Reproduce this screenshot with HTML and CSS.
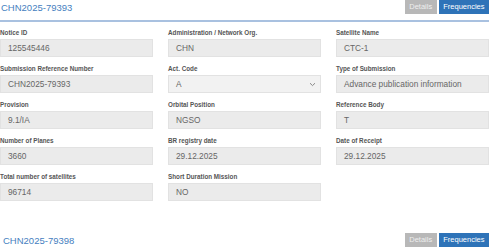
FILE: index.html
```html
<!DOCTYPE html>
<html lang="en">
<head>
    <meta charset="UTF-8">
    <title>Notices</title>
    <link rel="stylesheet" href="styles.css">
</head>
<body>

    <div class="notice">
        <div class="notice-head">
            <h2 class="notice-title">CHN2025-79393</h2>
            <div class="tabs">
                <button class="tab">Details</button>
                <button class="tab tab-active">Frequencies</button>
            </div>
        </div>

        <div class="fields">
            <div class="field">
                <label>Notice ID</label>
                <div class="value">125545446</div>
            </div>
            <div class="field">
                <label>Administration / Network Org.</label>
                <div class="value">CHN</div>
            </div>
            <div class="field">
                <label>Satellite Name</label>
                <div class="value">CTC-1</div>
            </div>

            <div class="field">
                <label>Submission Reference Number</label>
                <div class="value">CHN2025-79393</div>
            </div>
            <div class="field">
                <label>Act. Code</label>
                <div class="value select">
                    A
                    <svg class="chevron" width="7" height="5" viewBox="0 0 7 5"><path d="M1 1.2 L3.5 3.6 L6 1.2" fill="none" stroke="#888" stroke-width="1"/></svg>
                </div>
            </div>
            <div class="field">
                <label>Type of Submission</label>
                <div class="value">Advance publication information</div>
            </div>

            <div class="field">
                <label>Provision</label>
                <div class="value">9.1/IA</div>
            </div>
            <div class="field">
                <label>Orbital Position</label>
                <div class="value">NGSO</div>
            </div>
            <div class="field">
                <label>Reference Body</label>
                <div class="value">T</div>
            </div>

            <div class="field">
                <label>Number of Planes</label>
                <div class="value">3660</div>
            </div>
            <div class="field">
                <label>BR registry date</label>
                <div class="value">29.12.2025</div>
            </div>
            <div class="field">
                <label>Date of Receipt</label>
                <div class="value">29.12.2025</div>
            </div>

            <div class="field">
                <label>Total number of satellites</label>
                <div class="value">96714</div>
            </div>
            <div class="field">
                <label>Short Duration Mission</label>
                <div class="value">NO</div>
            </div>
        </div>
    </div>

    <div class="notice">
        <div class="notice-head">
            <h2 class="notice-title notice-title-indent">CHN2025-79398</h2>
            <div class="tabs">
                <button class="tab">Details</button>
                <button class="tab tab-active">Frequencies</button>
            </div>
        </div>
    </div>

</body>
</html>
```

FILE: styles.css
```css
* {
    box-sizing: border-box;
    margin: 0;
    padding: 0;
}

body {
    font-family: 'Liberation Sans', Arial, sans-serif;
    background: #fff;
    color: #444;
}

.notice {
    width: 489px;
    margin-bottom: 32px;
}

.notice-head {
    display: flex;
    justify-content: space-between;
    align-items: center;
    padding-bottom: 6px;
    border-bottom: 2px solid #a9c1e0;
}

.notice-title {
    font-size: 9.5px;
    font-weight: normal;
    color: #4580c0;
    padding-left: 1px;
}

.notice-title-indent {
    padding-left: 3px;
}

.tabs {
    display: flex;
    gap: 2px;
}

.tab {
    height: 14px;
    padding: 0 4.5px;
    border: none;
    background: #b8b8b8;
    color: #eeeeee;
    font-family: inherit;
    font-size: 7.5px;
    line-height: 14px;
}

.tab-active {
    background: #2e73b8;
    color: #fff;
}

.fields {
    display: grid;
    grid-template-columns: repeat(3, 153px);
    column-gap: 15px;
    row-gap: 7px;
    margin-top: 6px;
}

.field label {
    display: block;
    font-size: 6.3px;
    font-weight: bold;
    line-height: 9px;
    margin-bottom: 2px;
    color: #555;
}

.value {
    height: 18px;
    padding: 0 7px;
    background: #ebebeb;
    border: 1px solid #e2e2e2;
    font-size: 8.3px;
    line-height: 16px;
    color: #666;
}

.select {
    display: flex;
    justify-content: space-between;
    align-items: center;
    background: #f2f2f2;
    padding-right: 4px;
}
```
